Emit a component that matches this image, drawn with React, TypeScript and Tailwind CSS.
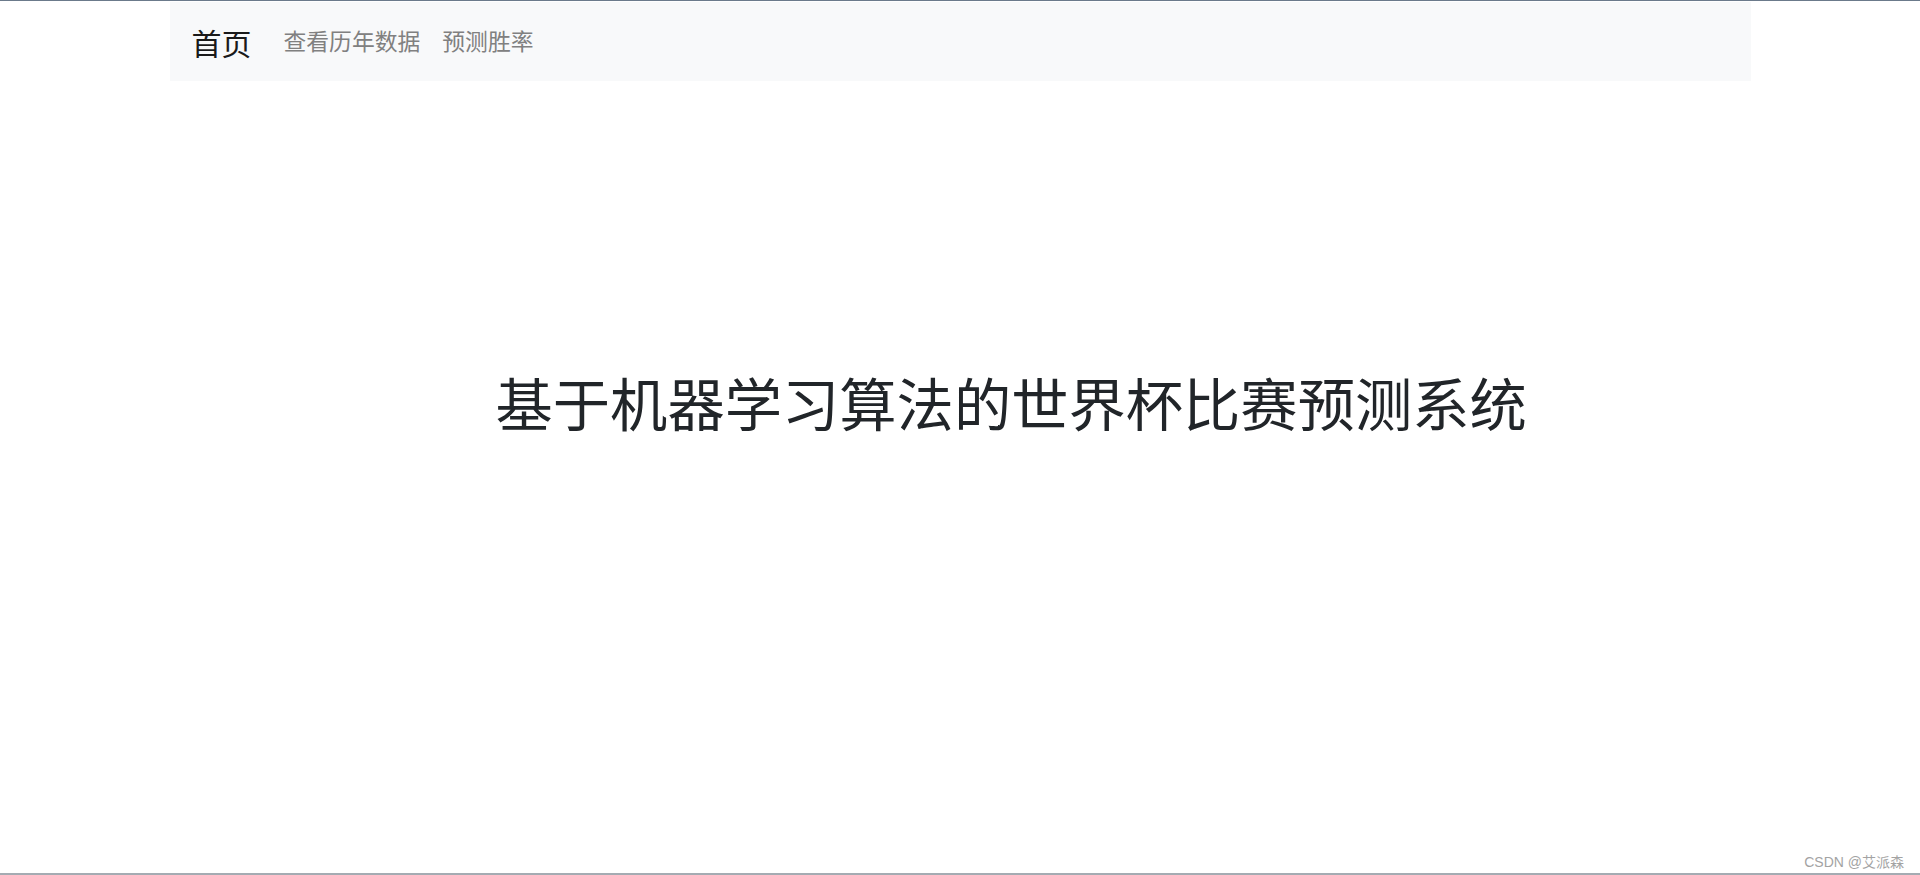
import React from "react";

export default function App() {
  const font = { fontFamily: '"Noto Sans CJK SC", "Noto Sans", sans-serif' };
  return (
    <div className="relative h-[875px] w-full overflow-hidden bg-white" style={font}>
      <div className="h-[1px] w-full bg-[#6b7a8b]" />
      <div className="h-[1px] w-full bg-white" />
      <nav className="mx-auto flex h-[79px] w-[1581px] items-center bg-[#f8f9fa] pl-[22px]">
        <a className="mr-[21px] text-[30px] leading-none text-[#1a1a1a]">首页</a>
        <a className="px-[11px] text-[22.8px] leading-none text-[#808080]">查看历年数据</a>
        <a className="px-[11px] text-[22.8px] leading-none text-[#808080]">预测胜率</a>
      </nav>
      <main className="mx-auto w-[1581px] pt-[292px] pl-[326px]">
        <h1 className="text-[57.3px] font-normal leading-none text-[#212529]">
          基于机器学习算法的世界杯比赛预测系统
        </h1>
      </main>
      <div
        className="absolute bottom-[6px] right-[16px] text-[14px] leading-none text-[#a3a3a3]"
        style={{ fontFamily: '"Liberation Sans", "Noto Sans CJK SC", sans-serif' }}
      >
        CSDN @艾派森
      </div>
      <div className="absolute bottom-0 left-0 h-[2px] w-full bg-[#a4abb2]" />
    </div>
  );
}
